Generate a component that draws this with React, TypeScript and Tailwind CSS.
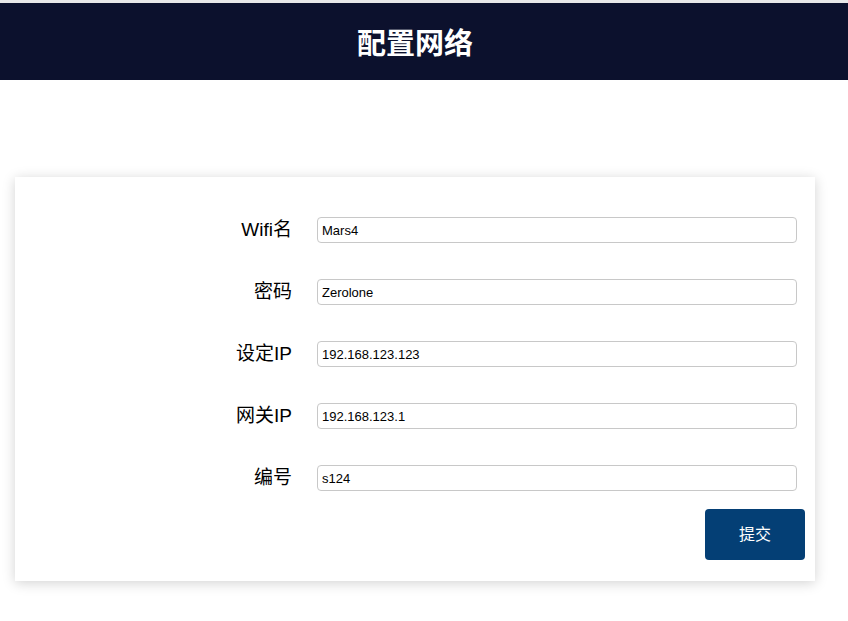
import { useState } from 'react';

const fields = [
  { label: 'Wifi名', value: 'Mars4' },
  { label: '密码', value: 'Zerolone' },
  { label: '设定IP', value: '192.168.123.123' },
  { label: '网关IP', value: '192.168.123.1' },
  { label: '编号', value: 's124' },
];

export default function App() {
  const [values, setValues] = useState(fields.map((f) => f.value));

  return (
    <div
      className="min-h-screen bg-white border-t-[3px] border-[#e8e8e8]"
      style={{ fontFamily: '"Liberation Sans", "Noto Sans CJK SC", sans-serif' }}
    >
      <header className="h-[77px] bg-[#0c112d] flex items-center justify-center pt-[6px] pr-[18px]">
        <h1 className="text-[29px] font-bold text-white">配置网络</h1>
      </header>

      <div className="mt-[97px] mx-[15px] w-[800px] bg-white shadow-[0_2px_12px_rgba(0,0,0,0.18)] pt-[40px] pb-[21px]">
        <form className="flex flex-col" onSubmit={(e) => e.preventDefault()}>
          {fields.map((f, i) => (
            <div key={f.label} className="flex items-center h-[26px] mb-[36px]">
              <label className="w-[277px] text-right text-[19px] text-black">
                {f.label}
              </label>
              <input
                className="ml-[25px] w-[480px] h-[26px] border border-[#c8c8c8] rounded-[4px] px-[4px] text-[13px] text-black outline-none"
                value={values[i]}
                onChange={(e) =>
                  setValues((v) => v.map((x, j) => (j === i ? e.target.value : x)))
                }
              />
            </div>
          ))}
          <div className="flex justify-end -mt-[18px] pr-[10px]">
            <button
              type="submit"
              className="w-[100px] h-[51px] bg-[#043f75] rounded-[4px] text-white text-[16px]"
            >
              提交
            </button>
          </div>
        </form>
      </div>
    </div>
  );
}
